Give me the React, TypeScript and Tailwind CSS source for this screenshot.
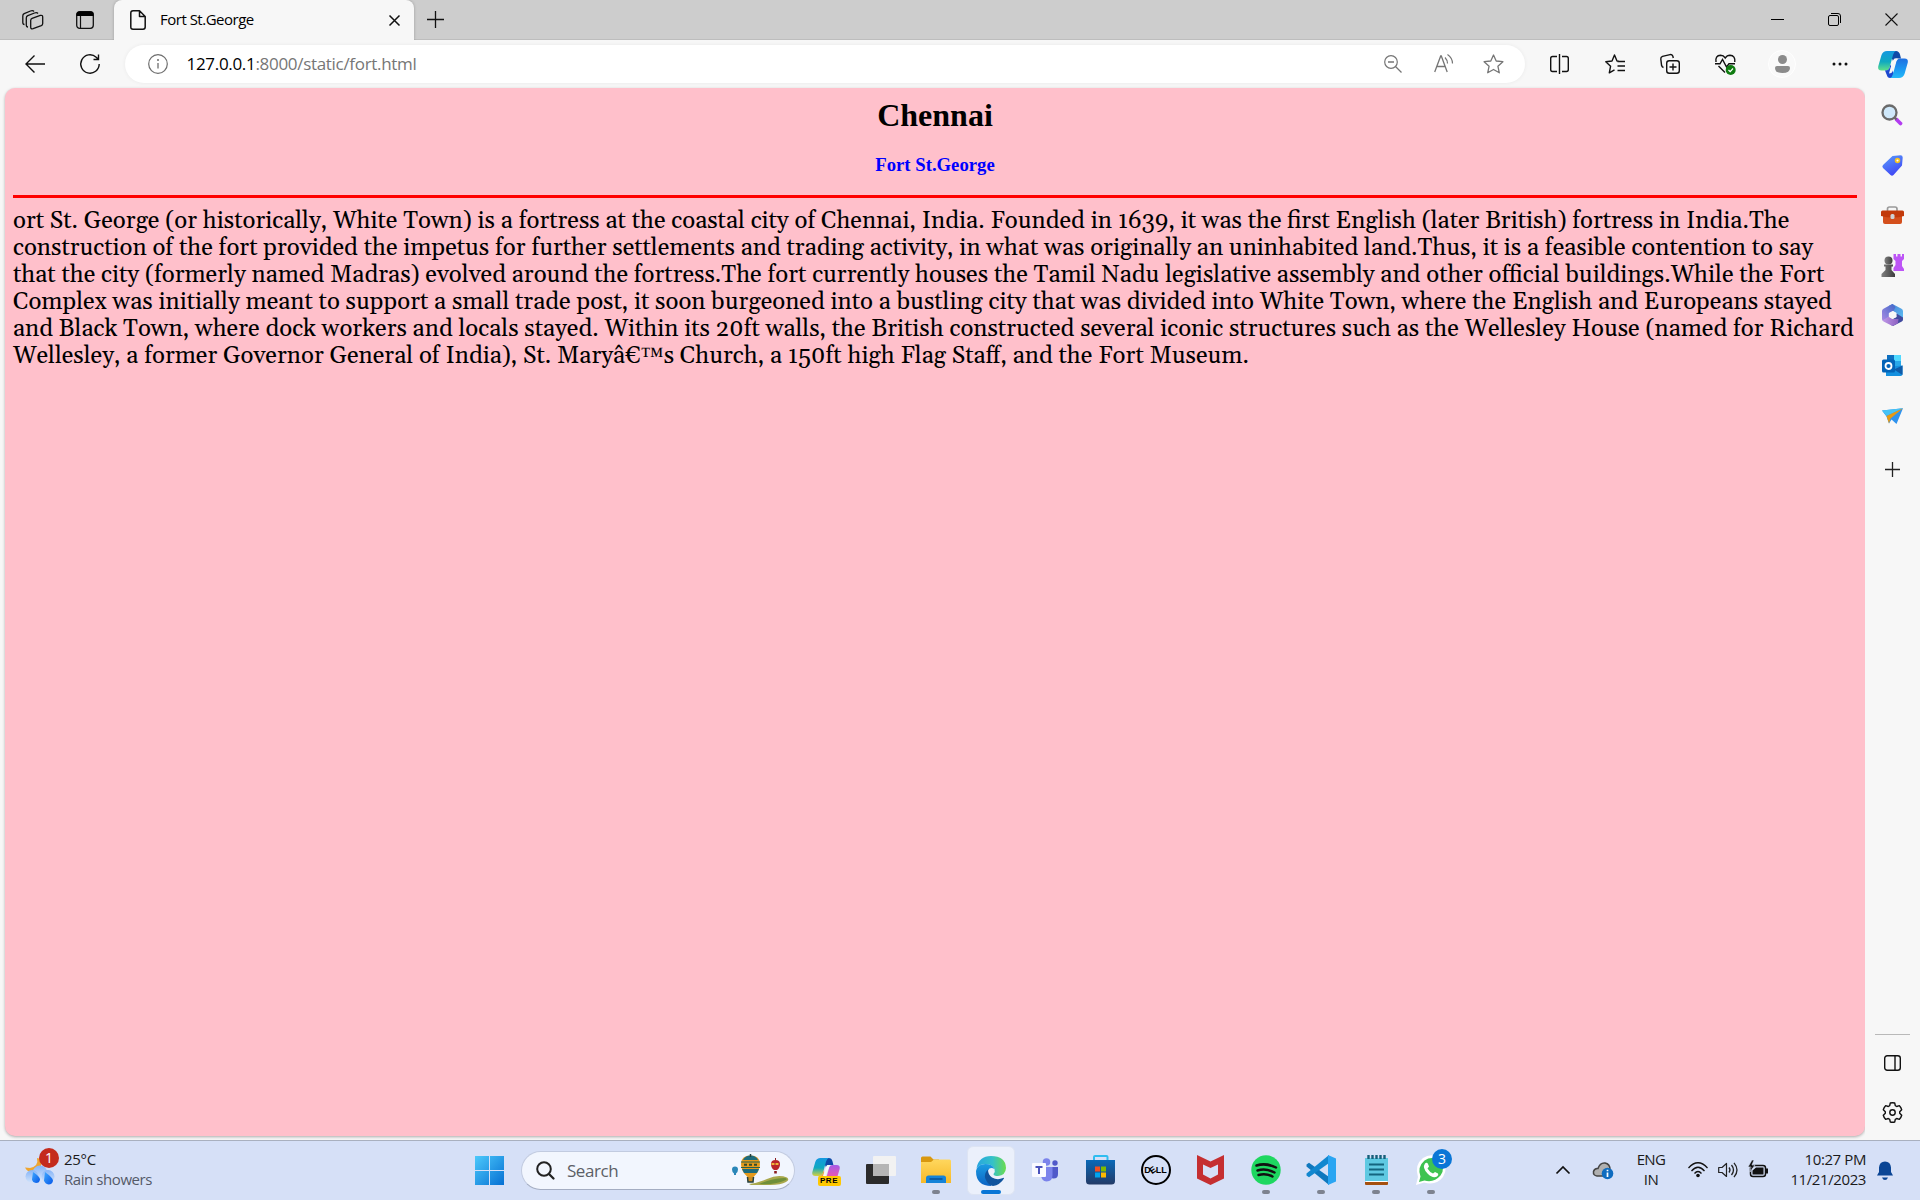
import React from "react";

type IconProps = { w: number; h: number; vb?: string; className?: string; children: React.ReactNode };

function Icon({ w, h, vb, className = "", children }: IconProps) {
  return (
    <svg width={w} height={h} viewBox={vb ?? `0 0 ${w} ${h}`} fill="none" className={`shrink-0 overflow-visible ${className}`}>
      {children}
    </svg>
  );
}

function TabStrip() {
  return (
    <div className="flex h-10 items-stretch border-b border-[#bdbdbd] bg-[#cdcdcd]">
      <div className="flex w-[114px] shrink-0 items-center pl-[22px]">
        <Icon w={22} h={20}>
          <g stroke="#111" strokeWidth="1.3" strokeLinejoin="round" fill="#cdcdcd">
            <path d="M2.500 14.500Q.800 14.500.800 12.500V6Q.800 4.300 2.200 3.700L8.500 1Q11 .2 12 1.500" />
            <path d="M6 17Q4.300 17 4.300 15V8Q4.300 6.300 5.800 5.700L12.500 3Q15 2.200 16 3.500" />
            <path d="M8.700 10.500Q8.700 9 10.100 8.400L18.300 5.400Q20.700 4.900 20.700 7V13.500Q20.700 15 19.300 15.600L11.100 18.700Q8.700 19.300 8.700 17.200Z" />
          </g>
        </Icon>
        <Icon w={18} h={18} className="ml-8">
          <rect x=".7" y=".7" width="16.600" height="16.600" rx="3" stroke="#111" strokeWidth="1.300" />
          <path d="M.5 5V3.500Q.5.500 3.500.500H14.500Q17.500.500 17.500 3.500V5Z" fill="#000" />
          <path d="M4.500 5V17" stroke="#111" strokeWidth="1.200" />
        </Icon>
      </div>
      <div className="-mb-px flex h-10 w-[300px] items-center rounded-t-lg bg-[#f7f7f7] pl-4 shadow-[0_0_3px_rgba(0,0,0,0.25)]">
        <Icon w={16} h={20}>
          <path d="M.8 3Q.8.800 3 .8H9.500L15.200 6.500V17Q15.200 19.200 13 19.200H3Q.8 19.200.8 17ZM9.500.8V6.500H15.200" stroke="#111" strokeWidth="1.500" strokeLinejoin="round" />
        </Icon>
        <span className="-mt-px ml-[14px] w-[229px] text-[15px] tracking-[-0.5px] text-black">Fort St.George</span>
        <Icon w={11} h={11}>
          <path d="M.5.5 10.500 10.500M10.500.5.5 10.500" stroke="#111" strokeWidth="1.500" />
        </Icon>
      </div>
      <div className="flex items-center pl-[13px]">
        <Icon w={17} h={17}>
          <path d="M8.500 0V17M0 8.500H17" stroke="#111" strokeWidth="1.300" />
        </Icon>
      </div>
      <div className="ml-auto flex items-center gap-[44px] pr-[22px]">
        <Icon w={13} h={13}><path d="M0 6.500H13" stroke="#000" /></Icon>
        <Icon w={13} h={13}>
          <rect x=".5" y="2.500" width="10" height="10" rx="1.500" stroke="#000" />
          <path d="M3 .5H10Q12.500.500 12.500 3V10" stroke="#000" />
        </Icon>
        <Icon w={13} h={13}><path d="M.5.5 12.500 12.500M12.500.5.5 12.500" stroke="#111" strokeWidth="1.100" /></Icon>
      </div>
    </div>
  );
}

function CopilotLogo({ w, h, id, pink }: { w: number; h: number; id: string; pink?: boolean }) {
  return (
    <Icon w={w} h={h} vb="0 0 30 27">
      <defs>
        <linearGradient id={`${id}a`} x1="0" y1="0" x2="0" y2="1">
          <stop stopColor="#1598e0" /><stop offset=".55" stopColor="#10a9c0" /><stop offset="1" stopColor={pink ? "#d8d13c" : "#5fe08a"} />
        </linearGradient>
        <linearGradient id={`${id}b`} x1="0" y1="0" x2="0" y2="1">
          <stop stopColor={pink ? "#a55be8" : "#1f6fe0"} /><stop offset=".6" stopColor={pink ? "#e557b4" : "#1c9cf2"} /><stop offset="1" stopColor={pink ? "#f5964f" : "#26b9f7"} />
        </linearGradient>
      </defs>
      <path d="M15 0H18Q21 0 22 3.500L23 7.500H18Q16 7.500 15 10L12 3Z" fill="#0f4aa8" />
      <path d="M9 0H18Q16 .5 15 4L11.500 17Q10.500 19.500 8 19.500H3.500Q-.5 19.500.2 15.500L3.500 4Q5 0 9 0Z" fill={`url(#${id}a)`} />
      <path d="M7 19.500Q10.500 19.500 11.500 17L12.500 13.500 16 23 14 27H12Q9.500 27 8.800 24Z" fill={pink ? "#f0a040" : "#1c49cf"} />
      <path d="M21 27H12Q14 26.500 15 23L18.500 10Q19.500 7.500 22 7.500H26.500Q30.500 7.500 29.800 11.500L26.500 23Q25 27 21 27Z" fill={`url(#${id}b)`} />
      <path d="M16.500 7.500H20Q18.500 8 18 10.500L14.500 20.500Q14 22.500 11 22.500L12.500 17 15 10Q15.500 8 16.500 7.500Z" fill="#f7f7f7" />
    </Icon>
  );
}

function Toolbar() {
  return (
    <div className="flex h-12 items-center bg-[#f7f7f7] pl-[25px]">
      <Icon w={20} h={18} className="-mt-px"><path d="M20 9H1M9.500.5 1 9 9.500 17.500" stroke="#111" strokeWidth="1.400" /></Icon>
      <Icon w={20} h={20} className="ml-[35px]">
        <path d="M19.200 10A9.200 9.200 0 1 1 16.200 3.200L18.300 5.300M18.500.5V5.500H13.500" stroke="#111" strokeWidth="1.400" />
      </Icon>
      <div className="-mt-px ml-[25px] flex h-[38px] w-[1400px] items-center rounded-full bg-white pl-[23px] shadow-[0_0_4px_rgba(0,0,0,0.06)]">
        <Icon w={20} h={20}>
          <circle cx="10" cy="10" r="9.300" stroke="#6d6d6d" strokeWidth="1.200" />
          <path d="M10 9V14.500" stroke="#6d6d6d" strokeWidth="1.300" /><circle cx="10" cy="6" r="1" fill="#6d6d6d" />
        </Icon>
        <span className="ml-[18.5px] text-[17px] tracking-[-0.31px] text-[#767676]"><span className="text-black">127.0.0.1</span>:8000/static/fort.html</span>
        <div className="ml-auto flex items-center pr-[21px]">
          <Icon w={18} h={18}>
            <circle cx="7" cy="7" r="6.300" stroke="#757575" strokeWidth="1.200" />
            <path d="M4 7H10M11.500 11.500 17.500 17.500" stroke="#757575" strokeWidth="1.300" />
          </Icon>
          <Icon w={20} h={19} className="ml-8">
            <path d="M.7 18 6.700 2H7.300L13.200 18M2.800 12.500H11" stroke="#757575" strokeWidth="1.300" />
            <path d="M11 3.500Q13.500 6 13.500 9.500M13.500.5Q18.500 4 18.500 9.500" stroke="#757575" strokeWidth="1.200" />
          </Icon>
          <Icon w={21} h={20} className="ml-[29px]">
            <path d="M10.500 1 13.200 7 19.900 7.700 14.900 12.200 16.300 18.800 10.500 15.500 4.700 18.800 6.100 12.200 1.100 7.700 7.800 7Z" stroke="#757575" strokeWidth="1.300" strokeLinejoin="round" />
          </Icon>
        </div>
      </div>
      <Icon w={19} h={20} className="ml-[25px]">
        <path d="M7 2.500H2.500Q.700 2.500.700 4.500V15.500Q.700 17.500 2.500 17.500H7M12 2.500H16.500Q18.300 2.500 18.300 4.500V15.500Q18.300 17.500 16.500 17.500H12M9.500 0V20" stroke="#111" strokeWidth="1.400" />
      </Icon>
      <Icon w={20} h={20} className="ml-9">
        <path d="M14 7.200 12 7 9.500 1 7 7 .8 7.700 5.600 12.200 4.300 18.800 9.500 15.800M12.500 7.500H20M12.500 12H20M12.500 16.500H20" stroke="#111" strokeWidth="1.400" strokeLinejoin="round" />
      </Icon>
      <Icon w={20} h={20} className="ml-[35px]">
        <path d="M3.500 13.500Q2 13 1.600 11.500L.8 5Q.600 3 2.500 2.300L10 .6Q12 .3 12.800 2L13.300 4" stroke="#111" strokeWidth="1.400" />
        <rect x="6.700" y="6.700" width="12.600" height="12.600" rx="2.500" stroke="#111" strokeWidth="1.400" />
        <path d="M13 9.500V16.500M9.500 13H16.500" stroke="#111" strokeWidth="1.400" />
      </Icon>
      <Icon w={21} h={20} className="ml-[35px]">
        <path d="M1 8Q0 1.500 5.500 1.300 8.500 1.300 10.300 4 12 1.300 15 1.300 20.500 1.500 19.800 8M3.500 12 10 18.500M0 9.800H5L7.500 5.500 11.500 13 14 9.800H20" stroke="#111" strokeWidth="1.400" />
        <circle cx="15.700" cy="16" r="5" fill="#0f7b10" />
        <path d="M13.500 16 15.200 17.700 18 14.500" stroke="#fff" strokeWidth="1.200" />
      </Icon>
      <div className="ml-[32px] flex size-7 items-center justify-center rounded-full border border-white bg-[#f9f9f9]">
        <Icon w={15} h={18}>
          <circle cx="7.500" cy="4.500" r="4.500" fill="#8b8b8b" />
          <path d="M2 11H13Q15 11 15 13 15 18 7.500 18 0 18 0 13 0 11 2 11Z" fill="#8b8b8b" />
        </Icon>
      </div>
      <Icon w={16} h={4} className="ml-[36px]"><circle cx="2" cy="2" r="1.500" fill="#111" /><circle cx="8" cy="2" r="1.500" fill="#111" /><circle cx="14" cy="2" r="1.500" fill="#111" /></Icon>
      <div className="ml-[30px]"><CopilotLogo w={30} h={27} id="cp" /></div>
    </div>
  );
}

function Sidebar() {
  return (
    <div className="flex w-[55px] shrink-0 flex-col items-center bg-[#f7f7f7] pr-px">
      <div className="flex h-[51px] items-center pt-0.5">
        <Icon w={22} h={22}>
          <path d="M15.500 15.500 19.500 19.500" stroke="#b23cf0" strokeWidth="3.800" strokeLinecap="round" />
          <path d="M12 12 15.500 15.500" stroke="#666" strokeWidth="2" />
          <circle cx="8.500" cy="8.500" r="7" fill="#cfe8fa" stroke="#6a6a6a" strokeWidth="2.300" />
        </Icon>
      </div>
      <div className="flex h-[51px] items-center pt-0.5">
        <Icon w={21} h={21}>
          <defs><linearGradient id="tag" x1="0" y1="0" x2=".5" y2="1"><stop stopColor="#5aa0fb" /><stop offset="1" stopColor="#4047f5" /></linearGradient></defs>
          <path d="M10.500 1 18.500.300Q20.700.300 20.700 2.500L20 10.500 11.500 20Q10 21.500 8.500 20L1 13Q-.3 11.500 1 10Z" fill="url(#tag)" />
          <circle cx="15.500" cy="5.500" r="1.900" fill="#fff" stroke="#f5c021" strokeWidth="1.700" />
        </Icon>
      </div>
      <div className="flex h-[50px] items-center">
        <Icon w={23} h={18}>
          <path d="M6.500 6V3Q6.500 1 8.500 1H14Q16 1 16 3V6" stroke="#9a9a9a" strokeWidth="1.700" />
          <path d="M2 9H21V16Q21 18 19 18H4Q2 18 2 16Z" fill="#d44f1c" /><path d="M1.500 4.500H21.500Q23 4.500 23 6V10Q12 13 0 10V6Q0 4.500 1.500 4.500Z" fill="#c23a0b" />
          <rect x="9.500" y="8" width="4" height="5" rx="1.500" fill="#cfd2d4" />
        </Icon>
      </div>
      <div className="flex h-[50px] items-center">
        <Icon w={23} h={23}>
          <defs><linearGradient id="paw"><stop stopColor="#808080" /><stop offset="1" stopColor="#3d3d3d" /></linearGradient></defs>
          <path d="M12.500 0H15V2.500H16.500V0H19.500V2.500H21V0H23V5L21 7V12L23 15V17H12.500V14L14.500 11V7L12.500 5Z" fill="#bd55f6" />
          <circle cx="7.500" cy="6.500" r="4" fill="url(#paw)" /><path d="M3 10.500H12V12.500H10.500V16L14 20V23H.5V20L4.500 16V12.500H3Z" fill="url(#paw)" />
        </Icon>
      </div>
      <div className="flex h-[50px] items-center">
        <Icon w={21} h={22}>
          <defs>
            <linearGradient id="m3a" x1="0" y1="0" x2="1" y2="1"><stop stopColor="#4a7fd4" /><stop offset="1" stopColor="#5cc0f4" /></linearGradient>
            <linearGradient id="m3b" x1="1" y1="0" x2="0" y2="1"><stop stopColor="#3f67c8" /><stop offset="1" stopColor="#a98be4" /></linearGradient>
            <linearGradient id="m3c" x1="0" y1="0" x2="1" y2="0"><stop stopColor="#c09ae8" /><stop offset="1" stopColor="#8c5fc0" /></linearGradient>
          </defs>
          <path d="M7 1.800 10.500 0 19.500 4.800Q21 5.700 21 7.200V15.500L14.500 11.500V9L11 7Z" fill="url(#m3a)" />
          <path d="M21 13.500V15.500Q21 16.800 19.800 17.500L11 22 8.500 20.800 10.500 15 14.500 13V9.500Z" fill="#414a9e" />
          <path d="M7 1.800 10.500 0 13.500 3 11.500 7 6.800 9.200V13L1 17Q0 16.200 0 15V7Q0 5.500 1.500 4.800Z" fill="url(#m3b)" />
          <path d="M.5 16.500 6.800 12.500 10.500 15 16.500 15 16 19.300 10.500 22 1.500 17.500Z" fill="url(#m3c)" />
          <path d="M10.700 7 14.300 9V13L10.700 15 7 13V9Z" fill="#f7f7f7" />
        </Icon>
      </div>
      <div className="flex h-[50px] items-center">
        <Icon w={21} h={21}>
          <path d="M5 0H19V14H5Z" fill="#28a8ea" /><path d="M12 0H19V6H12Z" fill="#50d9ff" /><path d="M5 0H12V6H5Z" fill="#0d6fc0" />
          <path d="M4 12 20.500 10.500V19Q20.500 21 18.500 21H4Z" fill="#1490df" /><path d="M12 14.500 20.500 10.500V20Z" fill="#0f5ba8" />
          <rect y="4.500" width="13" height="13" rx="1.500" fill="#0364b8" /><circle cx="6.500" cy="11" r="3" stroke="#fff" strokeWidth="1.800" />
        </Icon>
      </div>
      <div className="flex h-[50px] items-center pt-0.5">
        <Icon w={21} h={17}>
          <path d="M0 2.500 21 .3 14.500 16 9.500 11.500 7 15.500 4.500 8.500Z" fill="#2f93ee" /><path d="M0 2.500 21 .3 4.500 8Z" fill="#46c3f5" /><path d="M4.500 8 21 .3 8.500 10.500 7 15.500Z" fill="#e79a13" />
        </Icon>
      </div>
      <div className="flex h-[59px] items-center">
        <Icon w={15} h={15}><path d="M7.500 0V15M0 7.500H15" stroke="#222" strokeWidth="1.300" /></Icon>
      </div>
      <div className="mt-auto h-px w-[35px] bg-[#b9b9b9]" />
      <div className="flex h-[55px] items-center">
        <Icon w={17} h={16}><rect x=".7" y=".7" width="15.600" height="14.600" rx="2.500" stroke="#111" strokeWidth="1.400" /><path d="M11 1V15" stroke="#111" strokeWidth="1.400" /></Icon>
      </div>
      <div className="mb-[5px] flex h-[45px] items-center">
        <Icon w={21} h={21} vb="1.500 1.500 21 21">
          <path d="M9.800 2.500Q12 2 14.200 2.500L14.800 5.200 16.200 6 18.900 5.200Q20.600 6.900 21.200 9.200L19.200 11.200V12.800L21.200 14.800Q20.600 17.100 18.900 18.800L16.200 18 14.800 18.800 14.200 21.500Q12 22 9.800 21.500L9.200 18.800 7.800 18 5.100 18.800Q3.400 17.100 2.800 14.800L4.800 12.800V11.200L2.800 9.200Q3.400 6.900 5.100 5.200L7.800 6 9.200 5.200Z" stroke="#111" strokeWidth="1.400" strokeLinejoin="round" />
          <circle cx="12" cy="12" r="2.700" stroke="#111" strokeWidth="1.400" />
        </Icon>
      </div>
    </div>
  );
}

function Page() {
  return (
    <div className="mb-1 ml-[5px] w-[1860px] rounded-[10px] bg-[#ffc0cb] px-2 font-['Liberation_Serif',serif] text-black shadow-[0_1px_3px_rgba(0,0,0,0.3)]">
      <h1 className="pt-[9px] text-center text-[32px] leading-[37px] font-bold">Chennai</h1>
      <h3 className="mt-5 text-center text-[18.72px] leading-[22px] font-bold text-[#0000ff]">Fort St.George</h3>
      <hr className="mt-[19px] h-[3px] border-0 bg-[#ff0000]" />
      <p className="mt-[10px] font-[Gelasio,Georgia,'Liberation_Serif',serif] text-[24px] leading-[27px] whitespace-nowrap">
        ort St. George (or historically, White Town) is a fortress at the coastal city of Chennai, India. Founded in 1639, it was the first English (later British) fortress in India.The<br />
        construction of the fort provided the impetus for further settlements and trading activity, in what was originally an uninhabited land.Thus, it is a feasible contention to say<br />
        that the city (formerly named Madras) evolved around the fortress.The fort currently houses the Tamil Nadu legislative assembly and other official buildings.While the Fort<br />
        Complex was initially meant to support a small trade post, it soon burgeoned into a bustling city that was divided into White Town, where the English and Europeans stayed<br />
        and Black Town, where dock workers and locals stayed. Within its 20ft walls, the British constructed several iconic structures such as the Wellesley House (named for Richard<br />
        Wellesley, a former Governor General of India), St. Maryâ€<span className="font-['Liberation_Serif',serif] text-[23.5px] leading-none">™</span>s Church, a 150ft high Flag Staff, and the Fort Museum.
      </p>
    </div>
  );
}

function Cell({ children, dot }: { children: React.ReactNode; dot?: boolean }) {
  return (
    <div className="relative flex h-12 w-[55px] shrink-0 items-center justify-center">
      {children}
      {dot && <div className="absolute bottom-0 h-1 w-2 rounded-full bg-[#7d828f]" />}
    </div>
  );
}

function Taskbar() {
  return (
    <div className="flex h-[60px] items-center border-t border-[#a9b0bf] bg-[#d6e0f7] text-[15px] text-[#1b1b1b]">
      <div className="flex w-[475px] shrink-0 items-center pl-[25px]">
        <div className="relative">
          <Icon w={30} h={30}>
            <defs><linearGradient id="cl" x1="0" y1="0" x2="0" y2="1"><stop stopColor="#86b4f7" /><stop offset="1" stopColor="#d3e4fb" /></linearGradient><linearGradient id="dr" x1="0" y1="0" x2="1" y2="1"><stop stopColor="#3fa9ff" /><stop offset="1" stopColor="#0757e8" /></linearGradient></defs>
            <path d="M12 2Q14 10 5 12L0 11.500Q2 16 8 16H16V3Z" fill="#efa52e" />
            <circle cx="15" cy="17" r="7.500" fill="url(#cl)" /><circle cx="7" cy="20.500" r="6.500" fill="url(#cl)" /><circle cx="23" cy="20.500" r="6.500" fill="url(#cl)" />
            <path d="M8 16Q15 20.500 15 23.500 14.500 27 11 27 7.500 26.500 7 23.500Z" fill="url(#dr)" /><path d="M20 16Q27.500 21.500 28 24.500 27.500 28.500 23.500 28.500 20 28 19 24.500Z" fill="url(#dr)" />
          </Icon>
          <div className="absolute -top-[8px] left-[14px] flex size-5 items-center justify-center rounded-full bg-[#c42b1c] text-[14px] leading-none text-white">1</div>
        </div>
        <div className="-mt-1 ml-[9px] flex flex-col leading-5">
          <span className="tracking-[-0.3px]">25°C</span>
          <span className="tracking-[-0.43px] text-[#545a68]">Rain showers</span>
        </div>
      </div>
      <Icon w={29} h={29}>
        <defs><linearGradient id="win" x1="0" y1="0" x2="1" y2="1"><stop stopColor="#4cc9fb" /><stop offset="1" stopColor="#0670d3" /></linearGradient></defs>
        <path d="M0 0H14V14H0ZM15 0H29V14H15ZM0 15H14V29H0ZM15 15H29V29H15Z" fill="url(#win)" />
      </Icon>
      <div className="-mt-px ml-[17px] flex h-[39px] w-[274px] shrink-0 items-center rounded-full border border-[#c2cbe0] border-b-[#a4adc2] bg-[#f2f6fe] pl-[14px]">
        <Icon w={19} h={19}><circle cx="8" cy="8" r="6.800" stroke="#222" strokeWidth="2" /><path d="M13 13 17.500 17.500" stroke="#222" strokeWidth="2.300" strokeLinecap="round" /></Icon>
        <span className="mt-px ml-3 text-[17px] tracking-[-0.45px] text-[#5c5f66]">Search</span>
        <Icon w={58} h={32} className="mr-[4px] ml-auto">
          <path d="M0 15.500Q0 12.500 3 12.500 6 12.500 6 15.500 6 18 4 19.500V21H2V19.500Q0 18 0 15.500Z" fill="#2a86b8" />
          <path d="M17 30Q26 29 35 25 46 20 55 23.500 58 26 54 28 49 31 38 31H19Z" fill="#a9a84c" /><path d="M27 30Q38 25 52 24 56 24 54 26 44 31 27 30Z" fill="#6f8f3a" />
          <path d="M9 10Q9 1.500 18.500 1.500 28 1.500 28 10 28 17 21.500 23H15.500Q9 17 9 10Z" fill="#e49a1c" />
          <path d="M11 6Q13 1.500 18.500 1.500 24 1.500 26 6ZM10 15H27L25 19H12Z" fill="#1d6b7d" /><path d="M9 8H28M9 13.500H28" stroke="#26604f" strokeWidth="1.200" /><path d="M12 10.800H26" stroke="#374c2a" strokeWidth="2" strokeDasharray="3 2" />
          <path d="M18.500 0V3M15.500 23 16 28H21L21.500 23" stroke="#26403c" strokeWidth="1.500" fill="#c98c24" />
          <path d="M39 10Q39 6 43.500 6 48 6 48 10 48 14 45 16H42Q39 14 39 10Z" fill="#b8242a" /><path d="M39.500 10H47.500" stroke="#efb43a" strokeWidth="2" strokeDasharray="3 1" /><path d="M43.500 4V6" stroke="#8a1c20" /><rect x="42.200" y="17" width="2.600" height="2.500" fill="#8a1c20" />
        </Icon>
      </div>
      <div className="ml-[3px] flex">
        <Cell>
          <div className="relative">
            <CopilotLogo w={28} h={25} id="cq" pink />
            <div className="absolute top-[18px] left-[6px] flex h-[10px] w-[23px] items-center justify-center rounded-[2px] bg-[#ffc800] font-['Liberation_Sans',sans-serif] text-[8px] leading-none font-bold tracking-[0.5px] text-black">PRE</div>
          </div>
        </Cell>
        <Cell>
          <Icon w={30} h={28}><rect y="8" width="23" height="20" rx="1" fill="#2b2b2b" /><rect x="7" width="23" height="20" rx="1" fill="#f2f2f2" /><path d="M7 8H23V20H7Z" fill="#b5b5b5" /></Icon>
        </Cell>
        <Cell dot>
          <Icon w={30} h={28}>
            <defs><linearGradient id="fo" x1="0" y1="0" x2="0" y2="1"><stop stopColor="#ffd75e" /><stop offset="1" stopColor="#f7b928" /></linearGradient></defs>
            <path d="M0 2Q0 .5 1.500.500H9.500L12.500 3.500H18V8H0Z" fill="#d9980f" /><path d="M0 6H10L13 3.500H28.500Q30 3.500 30 5V27H0Z" fill="url(#fo)" />
            <path d="M5 27V22Q5 19.500 7.500 19.500H22.500Q25 19.500 25 22V27Z" fill="#1583d8" /><path d="M8.500 23H21.500" stroke="#0a4f94" strokeWidth="1.500" />
          </Icon>
        </Cell>
        <div className="relative mx-[3.500px] flex h-[49px] w-12 items-center justify-center rounded-md border border-[#dde4f3] bg-[#ebf0fb]">
          <Icon w={30} h={30}>
            <defs>
              <linearGradient id="ea" x1="0" y1="0" x2="1" y2="0"><stop stopColor="#27a6e0" /><stop offset=".55" stopColor="#35c1c8" /><stop offset="1" stopColor="#6bdc4c" /></linearGradient>
              <linearGradient id="eb" x1="0" y1="0" x2="0" y2="1"><stop stopColor="#1b9de2" /><stop offset="1" stopColor="#0c63c4" /></linearGradient>
            </defs>
            <path d="M.5 12Q3 0 15 0 29.500 0 30 12 29.500 19.500 22 20 17.500 20 17.500 18 19.500 16 18.500 13 16 8 9.500 8 4 8 .5 12Z" fill="url(#ea)" />
            <path d="M0 15Q1 8 9.500 8 16.500 8 18.500 13 14 10.500 12 14.500 9 22 15.500 30 0 30 0 15Z" fill="url(#eb)" />
            <path d="M12 13.500Q7.500 18 9.500 23 12 29 17 30 24 29 28 22.500 28 21.500 27 22 21.500 24.500 16 21.500 12 19 12 13.500Z" fill="#10549e" />
          </Icon>
          <div className="absolute bottom-0 h-1 w-5 rounded-full bg-[#0a76d6]" />
        </div>
        <Cell>
          <Icon w={27} h={24}>
            <circle cx="14.500" cy="4" r="3.800" fill="#7b83eb" /><circle cx="23" cy="5" r="2.700" fill="#5059c9" />
            <path d="M18 9H26V16Q26 20.500 21.500 20.500 18 20.500 18 17Z" fill="#5059c9" /><path d="M9 9H20.500V17Q20.500 23.500 14.500 23.500 9.500 23 9 17Z" fill="#7b83eb" />
            <rect y="5" width="14" height="14" rx="1" fill="#fafaff" /><path d="M3.500 9H10.500M7 9V16" stroke="#4b53bc" strokeWidth="2" />
          </Icon>
        </Cell>
        <Cell>
          <Icon w={29} h={30}>
            <defs><linearGradient id="st" x1="0" y1="0" x2="0" y2="1"><stop stopColor="#0a69b8" /><stop offset="1" stopColor="#233a66" /></linearGradient></defs>
            <path d="M8 6V2Q8 1 9 1H20.500Q21.500 1 21.500 2V6" stroke="#2fbdf0" strokeWidth="2" /><path d="M0 5H29V26Q29 29.500 25.500 29.500H3.500Q0 29.500 0 26Z" fill="url(#st)" />
            <path d="M9 11.500H14V16.500H9Z" fill="#f25022" /><path d="M15 11.500H20V16.500H15Z" fill="#7fba00" /><path d="M9 17.500H14V22.500H9Z" fill="#00a4ef" /><path d="M15 17.500H20V22.500H15Z" fill="#ffb900" />
          </Icon>
        </Cell>
        <Cell>
          <div className="flex size-[30px] items-center justify-center rounded-full border-2 border-black font-['Liberation_Sans',sans-serif] text-[9px] leading-none font-bold text-black">
            D<span className="-mx-[0.5px] inline-block -rotate-[35deg]">E</span>LL
          </div>
        </Cell>
        <Cell>
          <Icon w={27} h={30}><path d="M0 0 13.500 6.500 27 0V23.500L13.500 30 0 23.500ZM6 9.500V19.500L13.500 23.500 21 19.500V9.500L13.500 13Z" fill="#c52f31" fillRule="evenodd" /></Icon>
        </Cell>
        <Cell dot>
          <Icon w={30} h={30}><circle cx="15" cy="15" r="14.700" fill="#1ed760" /><path d="M5.500 10.500Q15 7.500 25 12.500M6.500 15.500Q15 13 23.500 17.500M7.500 20Q15 18 21.500 21.500" stroke="#111" strokeWidth="2.500" strokeLinecap="round" /></Icon>
        </Cell>
        <Cell dot>
          <Icon w={30} h={30}>
            <path d="M.5 9.500 3 7.800 23 22V30L.5 11.500Z" fill="#0f78be" /><path d="M.5 20.500 3 22.200 23 8V0L.5 18.500Z" fill="#1287cf" /><path d="M22 0 30 3.500V26.500L22 30Z" fill="#2aa5f2" />
          </Icon>
        </Cell>
        <Cell dot>
          <Icon w={23} h={30} className="ml-px">
            <path d="M0 27H23V29Q23 30 22 30H1Q0 30 0 29Z" fill="#a5500f" /><path d="M0 3H23V26.500H0Z" fill="#5fc9e2" /><path d="M.5 26.500H22.500" stroke="#fff" />
            <path d="M4 9.500H19M4 14.500H19M4 19.500H19" stroke="#14657f" strokeWidth="2" /><path d="M3.500 0V4M7.500 0V4M11.500 0V4M15.500 0V4M19.500 0V4" stroke="#17607a" strokeWidth="2.400" />
          </Icon>
        </Cell>
        <Cell dot>
          <Icon w={30} h={30}>
            <path d="M0 30 2 22Q-2 10 7 3 16-3 25 4 33 12 27 22 20 31 8 27.500Z" fill="#fff" /><path d="M3 27 4.500 21.500Q1 12 8.500 5.500 16.500.500 23.500 6 30 13 24.500 20.500 18 28 8.500 25.500Z" fill="#3fc351" />
            <path d="M9 8.500Q11 7 12 9L13 11.500 11.500 13.500Q13.500 17 17 18.500L19 17 22 18.500Q23 20 21 21.500 17 24 11.500 18.500 6 12.500 9 8.500Z" fill="#fff" />
          </Icon>
          <div className="absolute top-[3px] left-[29px] flex size-5 items-center justify-center rounded-full bg-[#0a76d6] text-[14px] leading-none text-white">3</div>
        </Cell>
      </div>
      <div className="ml-auto flex items-center pr-[27px]">
        <Icon w={14} h={8} className="-mt-px"><path d="M.5 7.500 7 1 13.500 7.500" stroke="#111" strokeWidth="1.700" /></Icon>
        <Icon w={21} h={18} className="ml-[23px]">
          <path d="M4 14Q0 13.500.5 9.500 1.500 6 5 6.500 7 .5 12 1 17 2 17 7.500L10 14Z" fill="#b0b0b0" stroke="#444" strokeWidth="1.500" /><circle cx="14.500" cy="11.500" r="5.800" fill="#0f6cc0" /><path d="M14.500 10.500V15M14.500 7.700V9.300" stroke="#fff" strokeWidth="1.700" />
        </Icon>
        <div className="-mt-1 ml-[20px] flex w-[34px] flex-col items-center leading-5 tracking-[-0.6px]"><span>ENG</span><span>IN</span></div>
        <div className="-mt-px ml-[20px] flex items-center gap-[10px]">
          <Icon w={20} h={16}><path d="M.5 6Q10-4.500 19.500 6M3.500 9Q10 1.500 16.500 9M6.500 11.500Q10 7.500 13.500 11.500" stroke="#111" strokeWidth="1.300" /><circle cx="10" cy="13.500" r="1.800" fill="#111" /></Icon>
          <Icon w={20} h={16}><path d="M.7 5.500H4L8.500 1.500V14.500L4 10.500H.7Z" stroke="#222" strokeWidth="1.200" strokeLinejoin="round" /><path d="M11 5.500Q13 8 11 10.500M13.500 3Q17.500 8 13.500 13M16 .8Q22 8 16 15.200" stroke="#222" strokeWidth="1.300" /></Icon>
          <Icon w={20} h={16}><rect x="2.500" y="3.500" width="15" height="11" rx="2.500" stroke="#111" strokeWidth="1.500" /><path d="M4.500 8.500 8 5.500H15.500V12.500H4.500ZM18 6.500H20V11.500H18Z" fill="#111" /><path d="M4-2 0 5H3L2 10 7 3H4L6-2Z" fill="#111" stroke="#d6e0f7" strokeWidth=".6" /></Icon>
        </div>
        <div className="-mt-1 ml-[20px] flex w-[78px] flex-col items-end leading-5 tracking-[-0.4px]"><span>10:27 PM</span><span>11/21/2023</span></div>
        <Icon w={16} h={19} className="ml-[11px]"><path d="M2 14V6.500Q2.500.5 8 .5 13.500.500 14 6.500V11L16 14.500H0L2 11ZM5 16.500H11Q10 19 8 19 6 19 5 16.500Z" fill="#0a4595" /></Icon>
      </div>
    </div>
  );
}

export default function App() {
  return (
    <div className="flex h-[1200px] w-[1920px] flex-col overflow-hidden bg-[#f7f7f7] font-['Open_Sans','Noto_Sans',sans-serif]">
      <TabStrip />
      <Toolbar />
      <div className="flex min-h-0 flex-1"><Page /><Sidebar /></div>
      <Taskbar />
    </div>
  );
}
